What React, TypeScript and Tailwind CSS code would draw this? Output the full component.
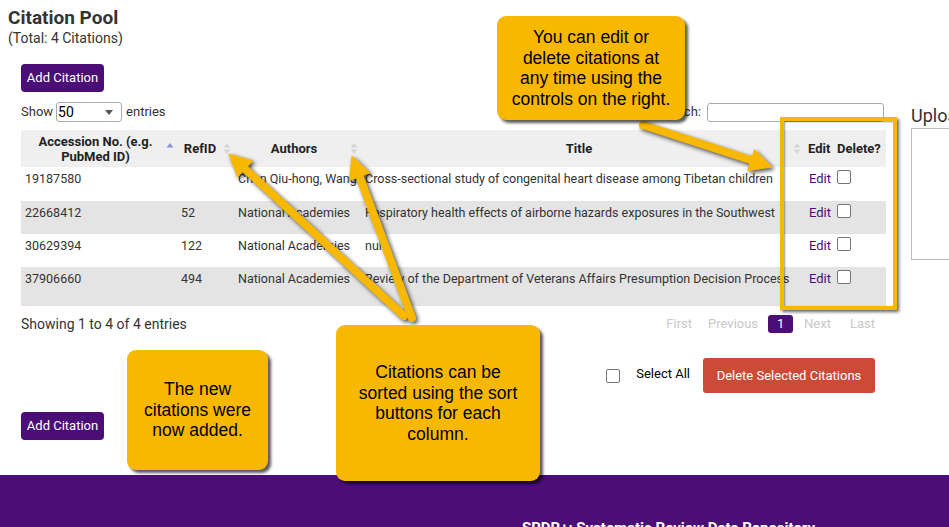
import type { ReactNode } from 'react';

type Row = { acc: string; ref: string; authors: string; title: string; bg: string; h: string };

const rows: Row[] = [
  { acc: '19187580', ref: '', authors: 'Chen Qiu-hong, Wang', title: 'Cross-sectional study of congenital heart disease among Tibetan children', bg: 'bg-white', h: 'h-[34px]' },
  { acc: '22668412', ref: '52', authors: 'National Academies', title: 'Respiratory health effects of airborne hazards exposures in the Southwest', bg: 'bg-[#e4e4e4]', h: 'h-[33px]' },
  { acc: '30629394', ref: '122', authors: 'National Academies', title: 'null', bg: 'bg-white', h: 'h-[33px]' },
  { acc: '37906660', ref: '494', authors: 'National Academies', title: 'Review of the Department of Veterans Affairs Presumption Decision Process', bg: 'bg-[#e4e4e4]', h: 'h-[39px]' },
];

const cols = 'grid grid-cols-[156px_57px_127px_443px_29px_53px]';

function SortIcon({ active }: { active?: boolean }) {
  return (
    <svg width="8" height="13" viewBox="0 0 8 13" className="shrink-0">
      <polygon points="4,1 7.5,5.5 0.5,5.5" fill={active ? '#8f8fe0' : '#d6d6d6'} />
      {!active && <polygon points="0.5,7.5 7.5,7.5 4,12" fill="#d6d6d6" />}
    </svg>
  );
}

function Th({ children, sort, active, pad = 'pl-[4px]' }: { children: ReactNode; sort?: boolean; active?: boolean; pad?: string }) {
  return (
    <div className={`flex items-center ${pad} pr-[3px] font-bold text-[13px] leading-[15px] text-[#222]`}>
      <span className={sort ? 'flex-1 text-center' : ''}>{children}</span>
      {sort && <SortIcon active={active} />}
    </div>
  );
}

function Box() {
  return <span className="block w-[14px] h-[14px] border border-[#767676] rounded-[2px] bg-white" />;
}

function Callout({ className, children }: { className: string; children: ReactNode }) {
  return (
    <div
      className={`absolute flex items-center justify-center text-center bg-[#f9b800] rounded-[9px] shadow-[3px_3px_3px_rgba(0,0,0,0.65)] text-black text-[17.5px] leading-[20.5px] font-['Liberation_Sans',Arial,sans-serif] ${className}`}
    >
      {children}
    </div>
  );
}

function arrow(tail: [number, number], tip: [number, number], hw = 22, hl = 22) {
  const dx = tip[0] - tail[0];
  const dy = tip[1] - tail[1];
  const len = Math.hypot(dx, dy);
  const ux = dx / len;
  const uy = dy / len;
  const bx = tip[0] - ux * hl;
  const by = tip[1] - uy * hl;
  const nx = -uy * (hw / 2);
  const ny = ux * (hw / 2);
  return {
    line: { x1: tail[0], y1: tail[1], x2: bx + ux * 2, y2: by + uy * 2 },
    head: `${tip[0]},${tip[1]} ${bx + nx},${by + ny} ${bx - nx},${by - ny}`,
  };
}

const arrows = [
  arrow([643, 125], [772, 167]),
  arrow([404, 316], [229, 154]),
  arrow([412, 318], [352, 156]),
];

export default function App() {
  return (
    <div className="relative w-[949px] h-[527px] overflow-hidden bg-white text-[#333] font-['Roboto','Liberation_Sans',sans-serif]">
      <div className="h-[475px] flex flex-col">
        <h1 className="pt-[5px] pl-[8px] text-[19px] leading-[25px] font-bold text-[#333]">Citation Pool</h1>
        <p className="pl-[8px] text-[14px] leading-[16px]">(Total: 4 Citations)</p>

        <div className="flex mt-[18px]">
          <div className="ml-[21px] w-[865px] flex flex-col">
            <button className="self-start h-[28px] w-[83px] rounded-[4px] bg-[#4b0e76] text-white text-[13px]">Add Citation</button>

            <div className="mt-[10px] h-[20px] flex items-center justify-between text-[13px]">
              <div className="flex items-center">
                <span>Show</span>
                <div className="ml-[3px] w-[66px] h-[20px] border border-[#aaa] rounded-[3px] flex items-center justify-between pl-[1px] pr-[8px] text-[14px] text-black">
                  <span>50</span>
                  <svg width="8" height="5" viewBox="0 0 8 5"><polygon points="0,0 8,0 4,5" fill="#555" /></svg>
                </div>
                <span className="ml-[4px]">entries</span>
              </div>
              <div className="flex items-center pr-[2px]">
                <span>Search:</span>
                <div className="ml-[6px] w-[177px] h-[19px] border border-[#aaa] rounded-[3px]" />
              </div>
            </div>

            <div className="mt-[8px] text-[12.5px]">
              <div className={`${cols} h-[37px] bg-[#efefef]`}>
                <Th sort active>Accession No. (e.g. PubMed ID)</Th>
                <Th sort pad="pl-[0px]">RefID</Th>
                <Th sort>Authors</Th>
                <Th sort>Title</Th>
                <Th>Edit</Th>
                <Th>Delete?</Th>
              </div>
              {rows.map((r) => (
                <div key={r.acc} className={`${cols} ${r.h} ${r.bg} leading-[16px]`}>
                  <div className="pl-[4px] pt-[4px]">{r.acc}</div>
                  <div className="pl-[4px] pt-[4px]">{r.ref}</div>
                  <div className="pl-[4px] pt-[4px] whitespace-nowrap">{r.authors}</div>
                  <div className="pl-[4px] pt-[4px] whitespace-nowrap">{r.title}</div>
                  <div className="pl-[5px] pt-[4px] text-[13px] text-[#4b0e76]">Edit</div>
                  <div className="pl-[4px] pt-[3px]"><Box /></div>
                </div>
              ))}
            </div>

            <div className="mt-[9px] h-[18px] flex items-center justify-between text-[13px]">
              <span className="text-[14px]">Showing 1 to 4 of 4 entries</span>
              <div className="flex items-center pr-[11px] text-[#c8c8c8]">
                <span>First</span>
                <span className="ml-[16px]">Previous</span>
                <span className="ml-[10px] w-[25px] h-[18px] rounded-[3px] bg-[#4b0e76] text-white flex items-center justify-center">1</span>
                <span className="ml-[11px]">Next</span>
                <span className="ml-[19px]">Last</span>
              </div>
            </div>

            <div className="mt-[25px] h-[35px] flex items-center justify-end pr-[11px] text-[13px]">
              <Box />
              <span className="ml-[16px] mb-[3px] text-black">Select All</span>
              <button className="ml-[13px] w-[172px] h-[35px] rounded-[3px] bg-[#cb4b37] text-white">Delete Selected Citations</button>
            </div>

            <button className="mt-[19px] self-start h-[28px] w-[83px] rounded-[4px] bg-[#4b0e76] text-white text-[13px]">Add Citation</button>
          </div>

          <div className="ml-[25px] flex-1 min-w-0 whitespace-nowrap">
            <div className="mt-[40px] text-[18px] leading-[23px] text-[#333]">Upload Citations</div>
            <div className="mt-[1px] w-[200px] h-[132px] border border-[#bbb]" />
          </div>
        </div>
      </div>

      <footer className="h-[52px] bg-[#4b0e76] pl-[522px] pt-[44px] text-white font-bold text-[15px] leading-[18px] whitespace-nowrap">
        SRDR+: Systematic Review Data Repository
      </footer>

      {/* tutorial overlay */}
      <div className="absolute left-[780px] top-[117px] w-[117px] h-[193px] border-[4px] border-[#f9b800] shadow-[2px_2px_3px_rgba(0,0,0,0.6),inset_1px_1px_2px_rgba(0,0,0,0.4)]" />

      <svg width="949" height="527" className="absolute left-0 top-0 pointer-events-none drop-shadow-[2px_2px_2px_rgba(0,0,0,0.7)]">
        {arrows.map((a, i) => (
          <g key={i} fill="#f9b800" stroke="#f9b800">
            <line {...a.line} strokeWidth="8" strokeLinecap="round" />
            <polygon points={a.head} strokeWidth="1" strokeLinejoin="round" />
          </g>
        ))}
      </svg>

      <Callout className="left-[497px] top-[16px] w-[188px] h-[104px]">
        You can edit or<br />delete citations at<br />any time using the<br />controls on the right.
      </Callout>
      <Callout className="left-[127px] top-[350px] w-[141px] h-[120px]">
        The new<br />citations were<br />now added.
      </Callout>
      <Callout className="left-[336px] top-[325px] w-[204px] h-[156px]">
        Citations can be<br />sorted using the sort<br />buttons for each<br />column.
      </Callout>
    </div>
  );
}
